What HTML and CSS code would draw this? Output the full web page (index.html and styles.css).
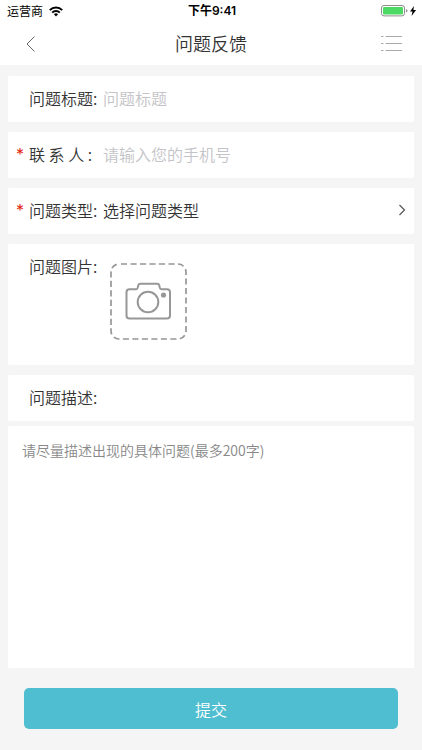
FILE: index.html
```html
<!DOCTYPE html>
<html lang="zh-CN">
<head>
<meta charset="utf-8">
<meta name="viewport" content="width=device-width, initial-scale=1">
<title>问题反馈</title>
<link rel="stylesheet" href="styles.css">
</head>
<body>
<div class="status">
  <div class="carrier">
    <span>运营商</span>
    <svg width="14" height="11" viewBox="0 0 14 11" aria-hidden="true">
      <g fill="none" stroke="#000" stroke-width="2">
        <path d="M.8 4.1a8.8 8.8 0 0 1 12.4 0"/>
        <path d="M3.2 6.6a5.4 5.4 0 0 1 7.6 0"/>
      </g>
      <path d="M4.9 8.3a3 3 0 0 1 4.2 0L7 10.5z"/>
    </svg>
  </div>
  <span class="time">下午9:41</span>
  <svg class="battery" width="36" height="12" viewBox="0 0 36 12" aria-hidden="true">
    <rect x=".5" y=".5" width="23" height="10.4" rx="2.5" fill="#fff" stroke="#8e8e8e"/>
    <rect x="2" y="2" width="20" height="7.5" rx="1.2" fill="#4cd964"/>
    <path d="M25 4v3.6q1.500-.6 1.500-1.800T25 4z" fill="#8e8e8e"/>
    <path d="M33 1l-4 5.400h2.500L30.500 11l4.600-5.900h-2.700z"/>
  </svg>
</div>
<header class="nav">
  <button class="icon-button" type="button" aria-label="返回">
    <svg width="12" height="18" viewBox="0 0 12 18"><path d="M9.500 1.500L2 9l7.500 7.500" fill="none" stroke="#666"/></svg>
  </button>
  <h1>问题反馈</h1>
  <button class="icon-button menu" type="button" aria-label="列表">
    <svg width="21" height="17" viewBox="0 0 21 17"><path d="M0 1.500h2.500M4.500 1.500H21M0 8.500h2.500M4.500 8.500H21M0 15.500h2.500M4.500 15.500H21" fill="none" stroke="#aaa"/></svg>
  </button>
</header>
<form class="form">
  <div class="card row">
    <span class="mark"></span>
    <label class="label" for="title">问题标题:</label>
    <input class="field" id="title" type="text" placeholder="问题标题">
  </div>
  <div class="card row">
    <span class="mark">*</span>
    <label class="label" for="phone">联 系 人 :</label>
    <input class="field" id="phone" type="tel" placeholder="请输入您的手机号">
  </div>
  <div class="card row">
    <span class="mark">*</span>
    <label class="label" for="type">问题类型:</label>
    <select class="field" id="type"><option>选择问题类型</option></select>
    <svg class="chevron" width="8" height="12" viewBox="0 0 8 12" aria-hidden="true"><path d="M1.500 1l5 5-5 5" fill="none" stroke="#555" stroke-width="1.200"/></svg>
  </div>
  <div class="card row photos">
    <span class="mark"></span>
    <span class="label">问题图片:</span>
    <button class="upload" type="button" aria-label="添加图片">
      <svg width="77" height="77" viewBox="0 0 77 77" fill="none" stroke="#979797">
        <rect x="1" y="1" width="75" height="75" rx="8" stroke-width="1.700" stroke-dasharray="6.100 3.400" stroke-dashoffset="-2"/>
        <path d="M19.500 26.300h6.300q1.400 0 1.800-1.300l.7-2.800q.4-1.400 1.800-1.400h17.300q1.400 0 1.800 1.400l.7 2.800q.4 1.300 1.800 1.300h5.300q3 0 3 3V52.500q0 3-3 3H19.500q-3 0-3-3V29.300q0-3 3-3z" stroke-width="2"/>
        <circle cx="38" cy="39" r="10.300" stroke-width="2"/>
        <circle cx="53.500" cy="32" r="2.600" fill="#979797" stroke="none"/>
      </svg>
    </button>
  </div>
  <div class="card row">
    <span class="mark"></span>
    <label class="label" for="detail">问题描述:</label>
  </div>
  <textarea class="card detail" id="detail" placeholder="请尽量描述出现的具体问题(最多200字)"></textarea>
  <button class="submit" type="submit">提交</button>
</form>
</body>
</html>
```
FILE: styles.css
```css
* {
  box-sizing: border-box;
}

body {
  margin: 0;
  min-height: 100vh;
  display: flex;
  flex-direction: column;
  background: #f5f5f5;
  color: #333;
  font: 350 16px/24px "Noto Sans CJK SC", sans-serif;
}

button,
input,
select,
textarea {
  margin: 0;
  padding: 0;
  border: 0;
  border-radius: 0;
  background: none;
  color: inherit;
  font: inherit;
}

svg {
  display: block;
}

.status {
  display: grid;
  grid-template-columns: 1fr auto 1fr;
  align-items: center;
  height: 22px;
  padding: 0 5px 0 7px;
  background: #fff;
  color: #000;
  font-size: 12px;
  line-height: 22px;
}

.carrier {
  display: flex;
  align-items: center;
  gap: 6px;
  font-weight: 400;
}

.time {
  font-family: Inter, "Noto Sans CJK SC", sans-serif;
  font-weight: 600;
}

.battery {
  justify-self: end;
}

.nav {
  display: grid;
  grid-template-columns: 1fr auto 1fr;
  align-items: center;
  height: 43px;
  padding: 0 20px 0 25px;
  background: #fff;
}

.nav h1 {
  margin: 0 5px 2px 0;
  font-size: 18px;
  font-weight: 350;
}

.icon-button {
  justify-self: start;
}

.menu {
  justify-self: end;
}

.form {
  flex: 1;
  display: flex;
  flex-direction: column;
  gap: 10px;
  padding: 11px 8px 21px;
}

.card {
  background: #fff;
  border-radius: 2px;
}

.row {
  display: flex;
  align-items: center;
  min-height: 46px;
  padding: 0 8px 2px;
}

.mark {
  width: 13px;
  color: #e02b12;
  font-family: Inter, sans-serif;
  font-weight: 400;
}

.label {
  width: 74px;
  white-space: nowrap;
}

.field {
  flex: 1;
  min-width: 0;
  height: 24px;
  appearance: none;
  outline: 0;
}

.field::placeholder {
  color: #c4c4c8;
}

.photos {
  align-items: flex-start;
  min-height: 121px;
  padding-top: 10px;
}

.upload {
  margin: 9px 0 0 7px;
}

.detail {
  flex: 1;
  margin-top: -5px;
  padding: 14px;
  resize: none;
  outline: 0;
  font-size: 14px;
  line-height: 20px;
}

.detail::placeholder {
  color: #888;
}

.submit {
  height: 41px;
  margin: 10px 16px 0;
  border-radius: 5px;
  background: #4fbed0;
  color: #fff;
}
```
